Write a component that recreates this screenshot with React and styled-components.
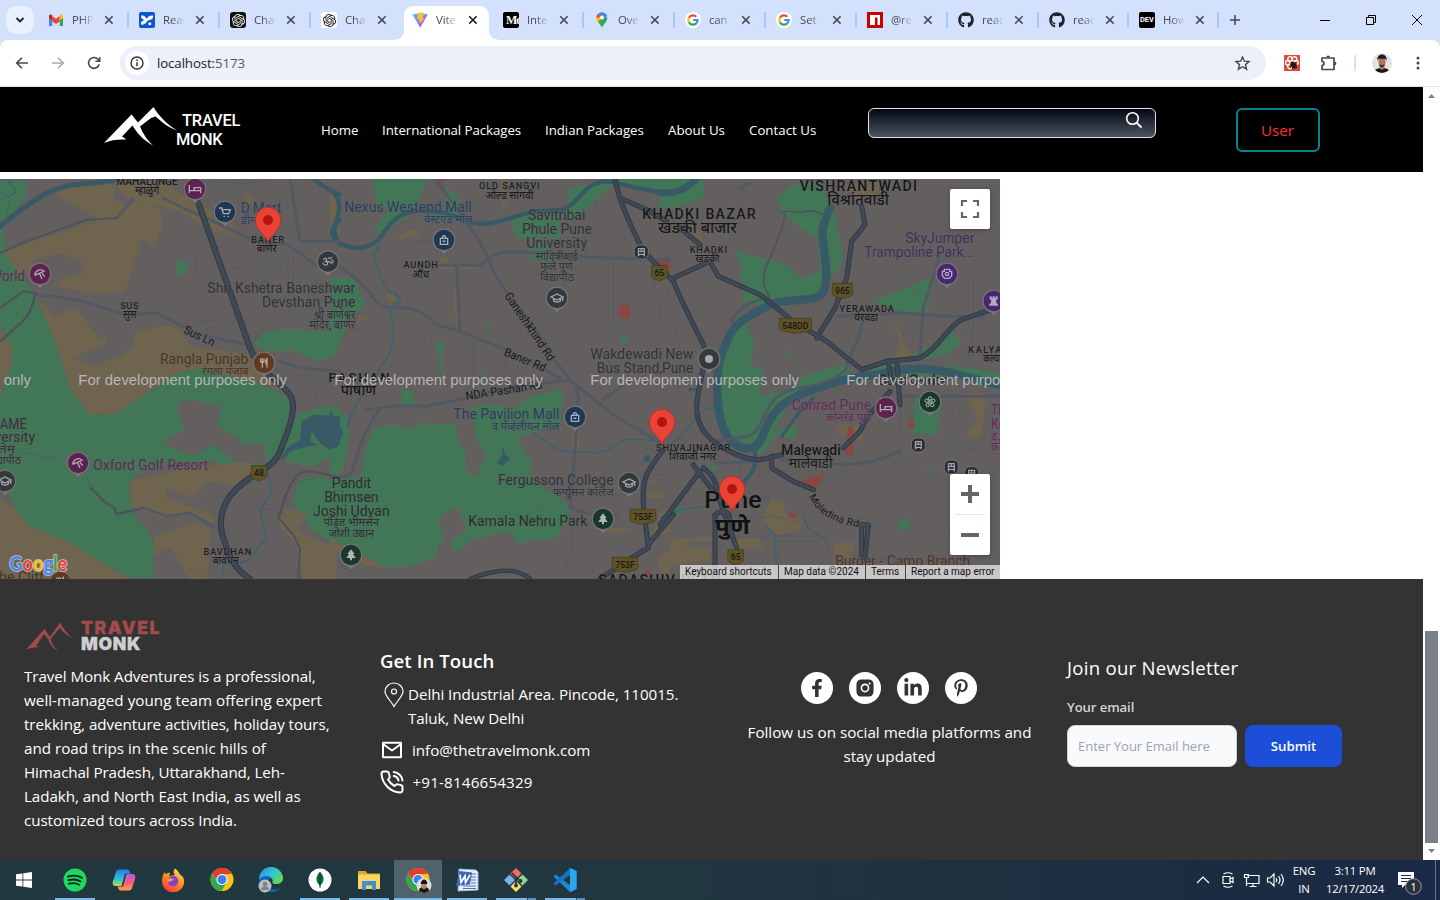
import React from "react";
import styled, { createGlobalStyle } from "styled-components";
import { FaGithub, FaFacebookF, FaLinkedinIn, FaPinterestP } from "react-icons/fa";
import { AiFillInstagram } from "react-icons/ai";
import { SiOpenai } from "react-icons/si";

const Global = createGlobalStyle`
  *, *::before, *::after { box-sizing: border-box; }
  body { margin: 0; overflow: hidden; font-family: "Open Sans", "Noto Sans", sans-serif; }
  svg { display: block; }
  p, h2, h3 { margin: 0; }
`;

const Screen = styled.div`
  width: 1440px;
  height: 900px;
  display: flex;
  flex-direction: column;
  background: #fff;
  overflow: hidden;
`;

/* ---------- browser chrome ---------- */

const TabStrip = styled.div`
  height: 40px;
  flex: none;
  display: flex;
  align-items: stretch;
  background: #d3e1fc;
  padding-left: 6px;
`;

const TabSearch = styled.div`
  width: 28px;
  height: 28px;
  margin: 6px 3px 0 0;
  border-radius: 10px;
  background: #e9f0fd;
  display: grid;
  place-items: center;
`;

const Tab = styled.div`
  width: ${(p) => p.$w || 91}px;
  display: flex;
  align-items: center;
  padding-left: 11px;
  position: relative;
`;

const ActiveShape = styled.svg`
  position: absolute;
  left: -9px;
  top: 6px;
`;

const Favicon = styled.div`
  width: 16px;
  height: 16px;
  position: relative;
`;

const TabTitle = styled.span`
  width: 21px;
  margin-left: 8px;
  font-size: 11.4px;
  letter-spacing: -0.1px;
  line-height: 16px;
  color: #45484d;
  white-space: nowrap;
  overflow: hidden;
  position: relative;
  mask-image: linear-gradient(90deg, #000 40%, transparent 105%);
`;

const TabClose = styled.svg`
  margin-left: 11px;
  position: relative;
`;

const TabDivider = styled.i`
  width: 2px;
  height: 16px;
  margin-left: auto;
  border-radius: 1px;
  transform: translateX(1px);
  background: ${(p) => (p.$off ? "transparent" : "#a8c7fa")};
`;

const WindowButtons = styled.div`
  margin-left: auto;
  display: flex;
  align-items: center;
  gap: 36px;
  padding-right: 18px;
`;

const NewTab = styled.div`
  display: flex;
  align-items: center;
  padding-left: 11px;
`;

const ToolbarBack = styled.div`
  flex: none;
  background: #d3e1fc;
`;

const Toolbar = styled.div`
  height: 47px;
  display: flex;
  align-items: center;
  background: #fff;
  border-radius: 8px 8px 0 0;
  border-bottom: 1px solid #dfe3e3;
  padding: 0 15px 0 14px;
`;

const NavButton = styled.div`
  width: 16px;
  height: 16px;
  margin-right: 20px;
`;

const Omnibox = styled.div`
  width: 1146px;
  height: 34px;
  border-radius: 17px;
  background: #ebf0fa;
  display: flex;
  align-items: center;
  padding: 0 15.5px 0 5px;
  margin-left: -2px;
`;

const SiteInfo = styled.div`
  width: 24px;
  height: 24px;
  border-radius: 50%;
  background: #fff;
  display: grid;
  place-items: center;
`;

const Url = styled.span`
  margin: 0 auto 0 8px;
  font-size: 13.3px;
  letter-spacing: -0.12px;
  color: #1f2124;
  em { font-style: normal; color: #55595e; }
`;

const ToolbarIcons = styled.div`
  display: flex;
  align-items: center;
  margin-left: auto;
`;

const PuzzleIcon = styled.svg`
  margin-left: 20px;
`;

const MenuDots = styled.svg`
  margin: 0 5px 0 23px;
`;

const ToolbarDivider = styled.i`
  width: 2px;
  height: 16px;
  background: #d3e3fd;
  margin: 0 15px 0 16px;
`;

/* ---------- page ---------- */

const Viewport = styled.div`
  height: 773px;
  flex: none;
  display: flex;
`;

const Page = styled.div`
  width: 1423px;
  display: flex;
  flex-direction: column;
`;

const ScrollTrack = styled.div`
  width: 17px;
  display: flex;
  flex-direction: column;
  align-items: center;
  padding: 7px 0;
  background: #fff;
`;

const ScrollThumb = styled.div`
  width: 13px;
  height: 212px;
  margin-top: auto;
  margin-bottom: 6px;
  background: #79808a;
`;

const SiteHeader = styled.header`
  height: 85px;
  margin-bottom: 7px;
  background: #000;
  display: flex;
  align-items: flex-start;
  padding-left: 104px;
`;

const Brand = styled.div`
  width: 217px;
  display: flex;
  padding-top: 19px;
`;

const BrandName = styled.div`
  font: 500 16.4px/19px Roboto, sans-serif;
  color: #fff;
  padding-top: 5px;
  margin-left: -2px;
`;

const BrandWord = styled.div`
  padding-left: ${(p) => p.$indent || 0}px;
  letter-spacing: ${(p) => p.$ls || 0}px;
`;

const Nav = styled.nav`
  width: 547px;
  display: flex;
  gap: 24px;
  padding-top: 33px;
`;

const NavLink = styled.a`
  width: ${(p) => p.$w}px;
  color: #fff;
  font-size: 13.3px;
  line-height: 20px;
  letter-spacing: ${(p) => p.$ls || 0}px;
  white-space: nowrap;
`;

const SearchBox = styled.div`
  width: 288px;
  height: 30px;
  margin-top: 21px;
  border: 1px solid #dfe3e8;
  border-radius: 6px;
  background: linear-gradient(#030712, #4b5563);
  display: flex;
  justify-content: flex-end;
  padding: 1px 11px 0 0;
`;

const UserButton = styled.button`
  width: 84px;
  height: 44px;
  margin: 21px 0 0 80px;
  padding: 0 1px 0 0;
  border: 2px solid #078390;
  border-radius: 6px;
  background: #000;
  color: #f9322c;
  font: 15.2px "Open Sans", sans-serif;
`;

const MapFrame = styled.section`
  width: 1000px;
  height: 400px;
  position: relative;
  overflow: hidden;
  background: #635f5f;
`;

const MapButton = styled.div`
  position: absolute;
  right: 10px;
  top: ${(p) => p.$top}px;
  width: 40px;
  height: ${(p) => p.$h}px;
  background: #fff;
  border-radius: 2px;
  box-shadow: 0 1px 4px rgba(0, 0, 0, 0.3);
`;

const Attribution = styled.div`
  position: absolute;
  right: 0;
  bottom: 0;
  height: 14px;
  display: flex;
  font: 10px/14px Roboto, sans-serif;
  color: #111;
`;

const Credit = styled.span`
  width: ${(p) => p.$w}px;
  padding-left: 5px;
  white-space: nowrap;
  background: rgba(245, 245, 245, 0.7);
  border-left: ${(p) => (p.$first ? 0 : 1)}px solid #444;
`;

const Footer = styled.footer`
  height: 281px;
  background: #333;
  color: #fff;
  display: flex;
  align-items: flex-start;
  padding-left: 24px;
`;

const AboutColumn = styled.div`
  width: 356px;
  padding-top: 38px;
`;

const FooterLogo = styled.div`
  display: flex;
  height: 47px;
`;

const FooterBrand = styled.div`
  font: 900 17.6px/17px Inter, sans-serif;
  padding-top: 2px;
  margin-left: 7px;
  color: #cfcfd0;
  -webkit-text-stroke: 0.3px currentColor;
`;

const RedWord = styled.div`
  color: #a04c4e;
  letter-spacing: 1.5px;
`;

const MonkWord = styled.div`
  letter-spacing: 0.7px;
  line-height: 15px;
`;

const Line = styled.p`
  font-size: 15.2px;
  line-height: 24px;
  letter-spacing: ${(p) => p.$ls || 0}px;
  white-space: nowrap;
`;

const ContactColumn = styled.div`
  width: 368px;
  padding-top: 70px;
`;

const FooterHeading = styled.h2`
  font-size: 18.6px;
  line-height: 24px;
  font-weight: ${(p) => p.$weight};
  letter-spacing: ${(p) => p.$ls || 0}px;
  white-space: nowrap;
`;

const ContactRow = styled.div`
  display: flex;
  gap: ${(p) => p.$gap}px;
  margin-top: ${(p) => p.$mt}px;
`;

const SocialColumn = styled.div`
  width: 283px;
  padding-top: 93px;
  text-align: center;
  display: flex;
  flex-direction: column;
  align-items: center;
`;

const SocialRow = styled.div`
  display: flex;
  gap: 16px;
  padding-right: 2px;
  margin-bottom: 16px;
`;

const SocialDot = styled.div`
  width: 32px;
  height: 32px;
  border-radius: 50%;
  background: #fff;
  color: #333;
  display: grid;
  place-items: center;
`;

const NewsColumn = styled.div`
  margin-left: 36px;
  padding-top: 77px;
`;

const FieldLabel = styled.label`
  display: block;
  margin-top: 17px;
  font-size: 13.1px;
  font-weight: 600;
  line-height: 20px;
  letter-spacing: -0.08px;
  color: #d1d5db;
`;

const FormRow = styled.div`
  display: flex;
  gap: 8px;
  margin-top: 8px;
`;

const EmailField = styled.div`
  width: 170px;
  height: 42px;
  padding-left: 10px;
  border: 1px solid #d1d5db;
  border-radius: 8px;
  background: #f9fafb;
  color: #9ca3af;
  font-size: 13.1px;
  line-height: 40px;
  letter-spacing: -0.05px;
  white-space: nowrap;
`;

const Submit = styled.button`
  width: 97px;
  height: 42px;
  border: 0;
  border-radius: 8px;
  background: #1d4ed8;
  color: #fff;
  font: 600 13.3px "Open Sans", sans-serif;
`;

/* ---------- taskbar ---------- */

const Taskbar = styled.div`
  height: 40px;
  flex: none;
  display: flex;
  background: linear-gradient(90deg, #22383f 0, #21373f 45%, #1c2e40 75%, #1a2945 100%);
`;

const TaskSlot = styled.div`
  width: 48px;
  height: 40px;
  margin-right: ${(p) => (p.$start ? 3 : 1)}px;
  display: flex;
  flex-direction: column;
  align-items: center;
  background: ${(p) => (p.$active ? "#50626a" : "transparent")};
`;

const TaskIcon = styled.div`
  height: 38px;
  padding-top: 2px;
  display: grid;
  place-items: center;
`;

const RunBar = styled.i`
  width: ${(p) => p.$w}px;
  height: 2px;
  background: ${(p) => (p.$split ? "linear-gradient(90deg, #76b9ed 31px, #33505f 31px, #33505f 32px, #5a8fb5 32px)" : "#76b9ed")};
`;

const Tray = styled.div`
  margin-left: auto;
  display: flex;
  align-items: center;
  color: #fff;
`;

const TrayText = styled.div`
  width: ${(p) => p.$w}px;
  margin-left: ${(p) => p.$ml}px;
  font-size: 11.4px;
  line-height: 17.5px;
  padding-bottom: 1px;
  letter-spacing: -0.25px;
  text-align: center;
  white-space: nowrap;
`;

const NoticeIcon = styled.svg`
  margin: 7px 0 0 12px;
`;

const ShowDesktop = styled.i`
  width: 5px;
  height: 40px;
  border-left: 1px solid #65748a;
  margin-left: 10px;
`;

/* ---------- favicons ---------- */

const GmailIcon = () => (
  <svg width="16" height="16" viewBox="0 0 16 16">
    <path d="M1 14V4l3.3 2.5V14z" fill="#4285f4" />
    <path d="M15 14V4l-3.3 2.5V14z" fill="#34a853" />
    <path d="M4.3 9.5V4L8 6.8 11.7 4v5.500L8 12z" fill="#ea4335" />
    <path d="M1 6V4c0-1.500 1.500-2 2.600-1.200l.7.5v5z" fill="#c5221f" />
    <path d="M15 6V4c0-1.500-1.500-2-2.600-1.200l-.7.5v5z" fill="#fbbc04" />
  </svg>
);

const BlueIcon = () => (
  <svg width="16" height="16" viewBox="0 0 16 16">
    <rect width="16" height="16" rx="2" fill="#0b57d0" />
    <path d="M2 3.500c3-.5 4.500 1 5.700 3.200C9 4.500 11 3.200 14.200 3.500c.3 2.500-1 4-3.700 4.500-1.500.3-2.200.8-2.800 1.800C6.500 12 4.500 13 1.800 12.500 1.700 10 3 8.700 5.800 8 3.500 7.500 2 6 2 3.500z" fill="#fff" />
    <circle cx="10.800" cy="11.800" r="1.500" fill="#fff" />
  </svg>
);

const OpenAiTile = styled.div`
  width: 16px;
  height: 16px;
  border-radius: 3px;
  display: grid;
  place-items: center;
  background: ${(p) => (p.$dark ? "#111" : "#fff")};
  color: ${(p) => (p.$dark ? "#fff" : "#111")};
`;

const ViteIcon = () => (
  <svg width="16" height="16" viewBox="0 0 16 16">
    <defs>
      <linearGradient id="vt" x1="0" y1="0" x2=".7" y2="1">
        <stop offset="0" stopColor="#41d1ff" />
        <stop offset="1" stopColor="#b23bff" />
      </linearGradient>
    </defs>
    <path d="M.3 2.500 8 1l7.700 1.500L8.300 15.500z" fill="url(#vt)" />
    <path d="M10.800.2 5.600 1.300l-.4 6 2-.4-.5 2.600 1.700-.5-.9 4L12.200 6l-2 .3 1.700-4z" fill="#ffc31f" />
  </svg>
);

const DarkTile = styled.div`
  width: 16px;
  height: 16px;
  overflow: hidden;
  border-radius: 2px;
  background: #000;
  color: #fff;
  font: ${(p) => p.$font};
  padding-left: ${(p) => p.$pl || 0}px;
  letter-spacing: ${(p) => p.$ls || 0}px;
`;

const MapsIcon = () => (
  <svg width="16" height="16" viewBox="0 0 16 16">
    <path d="M8 16C7.500 13 2.500 10 2.500 5.500L8 5.500h5.500C13.500 10 8.500 13 8 16z" fill="#34a853" />
    <path d="M2.800 7.500A5.500 5.500 0 0 1 4 1.800l4 3.700-4 5z" fill="#fbbc04" />
    <path d="M2.500 6A5.500 5.500 0 0 1 4 1.800L7 4.500z" fill="#ea4335" />
    <path d="M4 1.800C6.500-1 12 0 13.200 4L9 8 8 5.500z" fill="#4285f4" />
    <circle cx="8" cy="5.500" r="1.900" fill="#fff" />
  </svg>
);

const GoogleG = () => (
  <svg width="16" height="16" viewBox="0 0 16 16">
    <circle cx="8" cy="8" r="8" fill="#fff" />
    <g fill="none" strokeWidth="2.200">
      <path d="M11.300 4.700A4.700 4.700 0 0 0 3.900 5.700" stroke="#ea4335" />
      <path d="M3.900 5.700a4.700 4.700 0 0 0 0 4.700" stroke="#fbbc04" />
      <path d="M3.900 10.400a4.700 4.700 0 0 0 7.300 1" stroke="#34a853" />
      <path d="M11.200 11.400A4.700 4.700 0 0 0 12.600 8H8.200" stroke="#4285f4" />
    </g>
  </svg>
);

const NpmIcon = () => (
  <svg width="16" height="16" viewBox="0 0 16 16">
    <path fill="#cb0000" d="M0 0h16v16H0z" />
    <path fill="#fff" d="M3 3h10v10h-2.500V5.500H8V13H3z" />
  </svg>
);

const X = ({ bold }) => (
  <TabClose width="10" height="10" viewBox="0 0 10 10">
    <path d="M1.200 1.200l7.400 7.400M8.600 1.200L1.200 8.600" stroke={bold ? "#1f1f1f" : "#45484d"} strokeWidth="1.500" />
  </TabClose>
);

const TABS = [
  ["PHP", <GmailIcon />],
  ["React", <BlueIcon />],
  ["Chat", <OpenAiTile $dark><SiOpenai size={13} /></OpenAiTile>],
  ["Chat", <OpenAiTile><SiOpenai size={13} /></OpenAiTile>],
  ["Vite", <ViteIcon />],
  ["Inter", <DarkTile $font={'700 12px/16px "Liberation Serif", serif'} $pl={3} $ls={-1}>Me</DarkTile>],
  ["Over", <MapsIcon />],
  ["can", <GoogleG />],
  ["Set", <GoogleG />],
  ["@re", <NpmIcon />],
  ["react", <FaGithub size={16} color="#1f2328" />],
  ["react", <FaGithub size={16} color="#1f2328" />],
  ["How", <DarkTile $font={'700 7.5px/15px Roboto, sans-serif'} $pl={1}>DEV</DarkTile>],
];

const Chrome = () => (
  <>
    <TabStrip>
      <TabSearch>
        <svg width="10" height="6" viewBox="0 0 10 6"><path d="M1.500 1l3.500 3.500L8.500 1" fill="none" stroke="#1f1f1f" strokeWidth="1.800" /></svg>
      </TabSearch>
      {TABS.map(([title, icon], i) => (
        <Tab key={i} $w={i > 10 ? 90 : 91}>
          {i === 4 && (
            <ActiveShape width="109" height="34" viewBox="0 0 109 34">
              <path d="M0 34C8 34 12 30 12 24V10C12 4 16 0 22 0H87C93 0 97 4 97 10V24C97 30 101 34 109 34z" fill="#fff" />
            </ActiveShape>
          )}
          <Favicon>{icon}</Favicon>
          <TabTitle>{title}</TabTitle>
          <X bold={i === 4} />
          <TabDivider $off={i === 3 || i === 4} />
        </Tab>
      ))}
      <NewTab>
        <svg width="12" height="12" viewBox="0 0 12 12"><path d="M6 1v10M1 6h10" stroke="#45484d" strokeWidth="1.600" /></svg>
      </NewTab>
      <WindowButtons>
        <svg width="10" height="10" viewBox="0 0 10 10"><path d="M0 5.500h10" stroke="#000" /></svg>
        <svg width="10" height="10" viewBox="0 0 10 10"><path d="M.5 2.500h7v7h-7zM2.500 2.500v-2h7v7h-2" fill="none" stroke="#000" /></svg>
        <svg width="10" height="10" viewBox="0 0 10 10"><path d="M0 0l10 10M10 0L0 10" stroke="#000" /></svg>
      </WindowButtons>
    </TabStrip>
    <ToolbarBack>
      <Toolbar>
        <NavButton><svg width="16" height="16" viewBox="0 0 16 16"><path d="M14 8H3M8 2.700L2.700 8 8 13.300" fill="none" stroke="#45484d" strokeWidth="1.600" /></svg></NavButton>
        <NavButton><svg width="16" height="16" viewBox="0 0 16 16"><path d="M2 8h11M8 2.700L13.300 8 8 13.300" fill="none" stroke="#a9abae" strokeWidth="1.600" /></svg></NavButton>
        <NavButton><svg width="16" height="16" viewBox="0 0 16 16"><path d="M13.200 9.300A5.400 5.400 0 1 1 12 4.300L13.500 6M13.700 2v4.300H9.400" fill="none" stroke="#45484d" strokeWidth="1.600" /></svg></NavButton>
        <Omnibox>
          <SiteInfo>
            <svg width="14" height="14" viewBox="0 0 14 14"><circle cx="7" cy="7" r="6" fill="none" stroke="#303236" strokeWidth="1.400" /><path d="M7 6.200v4M7 3.600v1.400" stroke="#303236" strokeWidth="1.500" /></svg>
          </SiteInfo>
          <Url>localhost:<em>5173</em></Url>
          <svg width="17" height="17" viewBox="0 0 17 17"><path d="M8.500 2l1.800 4.200 4.700.4-3.500 3 1.100 4.600-4.100-2.500-4.100 2.500 1.100-4.600L2 6.600l4.700-.4z" fill="none" stroke="#45484d" strokeWidth="1.400" /></svg>
        </Omnibox>
        <ToolbarIcons>
          <svg width="16" height="16" viewBox="0 0 16 16">
            <path fill="#dc4a38" d="M0 0h16v16H0z" />
            <g fill="none" stroke="#fff" strokeWidth="1.300"><circle cx="6" cy="4" r="2.300" /><circle cx="10.500" cy="4" r="2.300" /><circle cx="3.800" cy="7.800" r="2.300" /><circle cx="12.300" cy="7.500" r="2" /><circle cx="6" cy="11.500" r="2.300" /></g>
            <ellipse cx="9.600" cy="10.200" rx="2.600" ry="3.800" transform="rotate(-35 9.600 10.200)" fill="#2d1613" /><path d="M6 9l7 4M12 7l-4 7M6 12l7-3" stroke="#2d1613" />
          </svg>
          <PuzzleIcon width="18" height="18" viewBox="0 0 18 18">
            <path d="M2 4h12v11.500H2v-4c2.700-.2 2.700-3.800 0-4z" fill="none" stroke="#45484d" strokeWidth="1.700" strokeLinejoin="round" /><path d="M6.300 3.500a1.900 1.900 0 0 1 3.800 0zM14.500 7.500a1.900 1.900 0 0 1 0 3.800z" fill="#45484d" />
          </PuzzleIcon>
          <ToolbarDivider />
          <svg width="22" height="22" viewBox="0 0 22 22">
            <clipPath id="av"><circle cx="11" cy="11" r="10" /></clipPath>
            <g clipPath="url(#av)"><path fill="#e4e2df" d="M0 0h22v22H0z" /><path d="M3 22c0-5 4-6 8-6s8 1 8 6z" fill="#17191c" /><path d="M8.500 12h5v4.500L11 18l-2.500-1.500z" fill="#a8745a" /><ellipse cx="11" cy="9.500" rx="3.600" ry="5" fill="#a8775d" /><path d="M8 12.500c1 3.500 5 3.500 6 0l-3 .5z" fill="#4a2c20" /><path d="M6.300 8.500C5.500.5 16.500.5 15.700 8.500L14.500 6.800h-7z" fill="#1c1a1c" /></g>
          </svg>
          <MenuDots width="4" height="16" viewBox="0 0 4 16"><g fill="#45484d"><circle cx="2" cy="3" r="1.500" /><circle cx="2" cy="8" r="1.500" /><circle cx="2" cy="13" r="1.500" /></g></MenuDots>
        </ToolbarIcons>
      </Toolbar>
    </ToolbarBack>
  </>
);

/* ---------- map drawing: three map units per pixel ---------- */

const GREEN = [
  [0, "M0 10H82L78 60 30 110 0 130ZM0 150 12 165 14 220 60 280 105 350 170 500 205 620 265 710 350 707 520 580 620 560 740 600 850 650 885 680 860 780 820 850 750 880 640 850 520 855 420 880 385 910 400 1010 440 1050 460 1100V1200H395L300 1150 210 1095 80 1040 45 990 30 950 0 910V660L35 560 35 500 0 440Z"],
  [0, "M530 245 563 255 558 285 540 298 528 280ZM757 495 800 460 880 453 940 460 1010 460V530L950 550 880 515 800 520ZM895 705 980 685 1020 690V830L930 865 860 850 850 800ZM915 895 985 900 1020 940V1105L940 1060 880 975 890 920Z"],
  [990, "M130 3H290L270 60 240 110 150 170 130 150 180 95 140 80ZM345 30 390 60 380 120 260 130 350 100ZM540 115 590 105 650 115 690 110 690 180H560ZM600 200H650L680 250 605 245ZM720 30 850 3H1020V50L850 20 780 80 730 130 705 120ZM0 300 70 300 110 380 60 420 20 520 0 530Z"],
  [990, "M320 495 342 492 335 560 345 590 330 580 328 530 312 510ZM468 440 478 428 480 450 472 455ZM872 475H890V500H872ZM215 630 250 640 255 675 215 680ZM455 580 468 590 460 630ZM0 690 50 710 60 780 40 870 0 920Z"],
  [990, "M130 750 200 740 230 755 280 735 375 740 380 780 405 820 410 880 440 895 470 830 440 780 420 690 480 680 560 690 600 655 695 635 700 660 690 740 640 755 560 780 580 820 610 850 600 890 640 930 700 965 720 1000 680 1080 560 1095 540 1060 420 1085 390 1120 358 1110 370 1080 410 1060 385 990 350 1000 325 1030 340 1080 310 1140 245 1165 140 1168 80 1130 20 1110 0 1060V900L90 900 105 820Z"],
  [1980, "M0 3H130V60L60 85 0 90ZM350 60 400 20 480 15 500 60 520 85 540 180 550 240 540 270 515 290 500 350 440 370 330 390 250 370 240 250 222 220 310 240 380 260 420 300 480 280 475 180 420 150 365 100ZM230 420 280 400 260 450 285 490 270 560 310 580 300 650 380 640 440 590 560 555 570 580 520 615 400 655 340 760 410 740 410 785 350 770 300 830 200 780 180 740 170 620 205 500Z"],
  [1980, "M640 372 700 345 812 300 805 405 720 400ZM880 462 905 495 860 530 790 545 720 550 715 540 800 510ZM640 570 700 545 740 570 900 565 1020 585V640L900 600 740 595 600 610ZM765 655H845L830 770 757 765ZM738 1022 755 1040 740 1060 712 1050 715 1030ZM140 855 175 870 160 882ZM802 865 822 880 800 882ZM375 525 395 515 385 535ZM40 990 70 990 60 1010 20 1030Z"],
];

const TAN = [
  [0, "M165 50 200 20 300 8 345 20 340 65 385 85 430 60 480 95 488 140 460 205 425 182 400 260 375 342 290 352 172 325 182 300 255 285 245 250 178 225 170 245 100 250 100 300 60 290 12 225 80 195 300 125Z"],
  [0, "M340 10H480L600 80 700 130 720 180 640 160 540 100 380 60ZM105 350 160 415 230 390 275 425 330 460 312 500 212 540 285 565 370 530 405 500 400 465 450 430 540 455 575 510 650 515 750 530 860 645 740 605 600 570 520 590 350 707 265 710 205 620 170 500ZM0 450 35 500V560L0 660Z"],
  [0, "M0 960 45 990 80 1040 210 1095 300 1150 390 1203H0ZM388 910 560 870 745 850 760 880 700 925 620 910 580 960 500 930 500 960 640 1010 640 1050 570 1010 480 1020 420 995 395 985ZM460 1075 600 1030 630 1060 625 1203H570L510 1110 460 1130ZM850 985 920 1010 890 1060 1010 1110V1203H910L890 1100 835 1040Z"],
  [0, "M735 50H760V80H735ZM880 1085 905 1095 890 1110ZM990 20 1020 60V200L990 180Z"],
  [990, "M200 180 230 160 265 155V175L200 185ZM330 235H353V262H446V272H326ZM370 318 380 350 388 430 378 445ZM508 3H525V100L515 95ZM168 350 190 345 200 365 180 375ZM85 415H115V425H85ZM725 760H738L750 790 745 815H728ZM820 1050H900V1060L820 1065ZM480 1170H540V1178H480ZM0 1080 90 1125 165 1168 100 1160 0 1110ZM945 900H980V910H945ZM960 940 1000 945V960H955ZM990 1000 1020 985V1060L965 1080ZM985 1130 1020 1120V1190H990Z"],
  [1980, "M530 20 660 8 655 50 600 60ZM90 140 120 160 130 200 95 180ZM685 415 725 465 735 500 755 530 715 550 700 540 722 505 715 470ZM520 740H600L610 800 580 770H540ZM912 645H975V665L965 770 930 785 920 765 950 720ZM335 960 370 975 380 1010 440 1020 410 1060 340 1070 320 1040 310 1010ZM30 1085 160 1075V1090H80V1110H155L150 1150 30 1160ZM225 1080 300 1080 310 1110 240 1110ZM520 1100 580 1090V1150H530Z"],
];

const RED = [
  [990, "M868 380 900 382 898 422 868 418ZM970 245H1020V285L990 260Z"],
  [1980, "M415 912 495 882 478 920 450 938ZM565 745 580 745V830L555 832ZM750 722H762V750L748 748ZM385 1003 410 1008V1020L388 1018Z"],
  [990, "M320 3H350L330 20ZM945 1180 960 1176V1190H945Z"],
];

const WATER_FILL = [
  [0, "M905 730 940 710 1020 715V800L990 815 960 795 935 760 930 790 950 800 880 815 840 850 860 810 900 785Z"],
  [990, "M0 695 40 765 20 810 0 805ZM518 800 526 832 540 840 520 862 500 855 515 835ZM942 835 958 828 960 852 940 850Z"],
];

const RIVERS = [
  [0, 15, "M0 145C80 80 120 50 180 30S300 20 345 5"],
  [0, 12, "M940 3 970 25 1020 50M1020 125C990 150 1010 180 1020 200"],
  [990, 13, "M0 35C40 60 30 110 10 150S60 220 110 205S160 150 200 120S320 90 400 125S540 110 620 100L700 95C750 70 750 40 790 20S850 15 900 25S960 42 1020 45"],
  [1980, 20, "M0 45C60 45 80 30 110 3"],
  [1980, 25, "M510 90C485 150 485 160 490 200C498 250 510 330 480 352S360 360 330 380S230 420 205 480S175 550 172 610S178 750 210 785S290 820 305 780S340 690 400 660S560 600 610 595S720 570 780 572S900 590 1020 622"],
  [1980, 12, "M285 820C290 880 270 890 245 920L190 985"],
  [1980, 10, "M90 635H112M365 775 420 700 460 660"],
];

const CREEKS = [
  [0, "M20 3 50 40 20 60M800 870 815 940 780 1000 800 1080 740 1150 670 1160 665 1200"],
  [990, "M150 180C150 240 120 220 130 230S150 330 195 350 175 380 180 400 200 460 180 520 150 550 150 570 80 660 60 720L50 750M610 765C680 810 670 820 740 822S820 830 860 800 940 790 1000 790"],
  [1980, "M30 800C100 750 110 690 160 690M315 1040 345 1070 350 1200M430 1010C440 1080 500 1060 505 1110M0 1020 60 995 150 985"],
];

const MINOR = [
  [0, "M0 40 30 60 20 110 60 150 75 190M480 55 640 130 700 165 800 200M560 8 720 15M690 20 800 10M600 200 720 215M590 230V290L700 270 900 280 980 330M850 210 840 280 770 330M600 300 580 390 640 370M640 340H660M755 500 790 450 880 420 940 400M800 220V380L870 400M880 220V350M740 430 600 430M610 455 700 435M820 580 980 600M780 620 940 640 1020 660M945 600V670M810 870 900 910 940 900M700 930 750 1000 830 990 900 1050M660 1030 700 1080 820 1050M690 1170 770 1130 900 1100M570 1170 620 1200M870 950 830 1040 820 1100M860 920 800 1000"],
  [0, "M50 830C100 810 110 850 160 835L230 830 270 920 300 960"],
  [990, "M180 230 260 190 350 190M300 270 295 320 360 325M200 300 240 380M190 440 280 460M280 460 290 540M110 690V600L250 540M430 480V600L520 615M530 520 520 610M130 960 40 980M600 50 610 80M800 60 760 200 770 230M850 240V460L960 470M760 350 820 430 920 460M760 350 650 370M660 390 740 540M940 420 990 400M970 300 1000 460M880 860 930 800 990 830M760 830 830 880 910 870 940 850M830 830 850 910M880 880 960 890 1020 890M720 1110 860 1120 950 1110M330 1100 320 1200M20 1160 110 1200M960 820 1020 830M870 860 890 830M630 990 560 1040M720 980 725 1100 700 1203M930 900 1020 910M950 980 1020 990M940 700 980 780M750 720 770 760"],
  [1980, "M0 230 80 260M20 330 50 460 80 620M80 620 0 640M130 500 150 450 200 480M245 30 310 80 360 100M310 320 310 260 370 200M30 760 80 800 110 900M60 820 20 940M120 950 60 980M200 1080 420 1070M30 1000 160 1010M230 1020 340 1015 450 1040M440 820 480 900 560 940 700 960M560 850V950M720 660 725 850 800 990M720 850 650 870 540 850M720 800H870L1020 830M800 990 900 960M720 1060 850 1040 1000 1140M700 1180 800 1060M600 1050 700 1040M850 420 870 500M940 300V460L920 560M830 330 850 240 920 260M820 30 870 180M780 340 700 300 600 320M600 660 640 680M870 660 1020 650M900 660 890 850M980 780 900 830M1000 880 920 900M620 200 700 240 790 230M650 120 760 80 830 100M240 840V940L330 960M290 840 300 900 420 960M380 860V940M0 720 80 700M0 860 80 870M150 870 200 960 340 960M350 1090 480 1090M550 960 540 1080M560 1120 640 1160 730 1110"],
];

const ROADS = [
  [0, 8, "M490 60 570 100 640 130 780 195 860 200 900 225 950 265M110 350 230 365 380 410 470 405 530 435 600 470 740 500M840 550 900 570 1020 580M870 3 900 190 1020 190M350 120 400 60M430 990 500 1015 570 1005 650 1050"],
  [990, 9, "M0 240C50 290 80 290 130 360S220 340 320 440L390 460 540 520 620 560 690 600M320 8C370 80 400 120 430 160S480 270 520 330L600 430 680 555 730 615 850 710 1000 800M380 270 390 460M330 262H450L490 230 520 222 650 225 770 238 1020 245M110 695 200 683 290 685 410 660 560 625 650 615 720 605M150 690C100 760 80 830 70 870S40 890 0 900M740 635 745 660 735 820 720 990M820 665 880 620M725 985C740 1000 760 1010 860 1010"],
  [1980, 9, "M240 30 270 15M530 415 720 405 860 415 970 415M610 410C600 500 570 520 560 560M840 230 790 390 780 530M720 655 1020 655M300 365C250 380 230 400 215 430M365 845 560 860 640 850 720 820M165 790 260 775C290 770 300 740 320 700S360 640 420 630 540 600 560 570M170 855 300 850"],
];

const DARK_ROADS = [
  [0, 6, "M0 225 80 190 260 125 350 120"],
  [0, 7, "M0 390 70 340 105 345M105 350C90 420 80 420 0 490M270 930C300 950 310 980 340 985L350 1008 430 990M835 1020C860 940 880 880 920 880S980 890 1020 900M835 1020 880 1070 900 1110 895 1203"],
  [1980, 5, "M365 105C400 90 410 110 440 100S480 115 500 110M375 110C360 200 320 240 312 290S330 340 330 370"],
];

const HIGHWAYS = [
  [0, 15, "M595 75 750 510C780 590 860 620 875 660S860 770 840 820 770 880 730 915C670 960 650 1020 670 1080S700 1170 750 1203"],
  [990, 12, "M855 3C870 80 910 160 940 220L1030 310M870 60 960 100 1010 130M1000 815C950 880 935 900 940 980L955 1110C900 1140 860 1170 810 1203M955 1100 1030 1010"],
  [990, 10, "M420 1203C480 1180 550 1160 600 1203"],
  [1980, 12, "M60 150 120 200M155 260 175 295 300 350 400 430 500 490 605 575 680 550 780 540C840 510 870 430 920 420L1020 385M605 85 615 140 575 190 560 300 525 390 470 480M40 300 150 250M40 310C60 360 110 460 130 500S110 620 110 690 160 800 230 830 330 835 365 830M335 835 335 870 400 910 460 935M130 870C170 900 170 930 180 970L230 1110M120 880 0 1040M100 860 160 940M165 1200V1010C190 990 210 1000 210 1030M550 810 600 760 620 720 690 640M685 550 695 610M710 550 720 680M600 1040H625L615 1140M605 1040V1130"],
];

const LABELS = [
  [0, 441, 20, "MAHALUNGE", 29, 185, "m", "#1b1c1e", 500],
  [0, 441, 48, "म्हाळुंगे", 27, 72, "m", "#1b1c1e", 500],
  [0, 722, 105, "D Mart", 40, 122, "s", "#263e5e"],
  [0, 722, 138, "डीमार्ट", 28, 76, "s", "#263e5e"],
  [0, 803, 196, "BANER", 26, 98, "m", "#1b1c1e", 500],
  [0, 800, 223, "बाणेर", 26, 60, "m", "#1b1c1e", 500],
  [0, 75, 308, "World", 40, 104, "e", "#57304f"],
  [0, 1066, 344, "Shri Kshetra Baneshwar", 40, 444, "e", "#2d3236"],
  [0, 1066, 387, "Devsthan Pune", 40, 280, "e", "#2d3236"],
  [0, 1066, 422, "श्री बाणेश्वर", 30, 125, "e", "#2d3236"],
  [0, 1066, 453, "मंदिर, बाणेर", 30, 138, "e", "#2d3236"],
  [0, 388, 393, "SUS", 26, 55, "m", "#1b1c1e", 500],
  [0, 389, 421, "सुस", 26, 40, "m", "#1b1c1e", 500],
  [0, 745, 558, "Rangla Punjab", 40, 265, "e", "#4b3421"],
  [0, 745, 591, "रंगला पंजाब", 29, 138, "e", "#4b3421"],
  [0, 80, 752, "FLAME", 40, 122, "e", "#2d3236"],
  [0, 105, 792, "University", 40, 182, "e", "#2d3236"],
  [0, 45, 824, "फ्लेम", 29, 75, "e", "#2d3236"],
  [0, 63, 857, "विद्यापीठ", 29, 102, "e", "#2d3236"],
  [0, 280, 877, "Oxford Golf Resort", 40, 344, "s", "#582b50"],
  [0, 682, 1131, "BAVDHAN", 26, 143, "m", "#1b1c1e", 500],
  [0, 677, 1158, "बावधन", 26, 78, "m", "#1b1c1e", 500],
  [0, 132, 1213, "The Cliff", 40, 160, "e", "#4b3421"],
  [990, 87, 612, "PASHAN", 37, 183, "m", "#161718", 500],
  [990, 85, 651, "पाषाण", 34, 106, "m", "#161718", 500],
  [990, 538, 34, "OLD SANGVI", 26, 182, "m", "#1b1c1e", 500],
  [990, 538, 62, "ओल्ड सांगवी", 26, 145, "m", "#1b1c1e", 500],
  [990, 43, 102, "Nexus Westend Mall", 40, 382, "s", "#263e5e"],
  [990, 427, 135, "वेस्टएंड मॉल", 29, 145, "e", "#263e5e"],
  [990, 272, 271, "AUNDH", 26, 103, "m", "#1b1c1e", 500],
  [990, 272, 299, "औंध", 26, 50, "m", "#1b1c1e", 500],
  [990, 680, 125, "Savitribai", 40, 172, "m", "#2d3236"],
  [990, 681, 168, "Phule Pune", 40, 210, "m", "#2d3236"],
  [990, 680, 210, "University", 40, 182, "m", "#2d3236"],
  [990, 680, 245, "सावित्रीबाई", 29, 125, "m", "#2d3236"],
  [990, 680, 277, "फुले पुणे", 29, 98, "m", "#2d3236"],
  [990, 681, 309, "विद्यापीठ", 29, 102, "m", "#2d3236"],
  [990, 781, 542, "Wakdewadi New", 40, 309, "s", "#2d3236"],
  [990, 800, 585, "Bus Stand,Pune", 40, 290, "s", "#2d3236"],
  [990, 370, 722, "The Pavilion Mall", 40, 318, "s", "#263e5e"],
  [990, 688, 755, "द पॅव्हेलीयन मॉल", 29, 202, "e", "#263e5e"],
  [990, 64, 930, "Pandit", 40, 118, "m", "#1b332b"],
  [990, 64, 971, "Bhimsen", 40, 163, "m", "#1b332b"],
  [990, 64, 1013, "Joshi Udvan", 40, 230, "m", "#1b332b"],
  [990, 64, 1045, "पंडित भीमसेन", 29, 165, "m", "#1b332b"],
  [990, 64, 1078, "जोशी उद्यान", 29, 136, "m", "#1b332b"],
  [990, 851, 921, "Fergusson College", 40, 347, "e", "#2d3236"],
  [990, 851, 953, "फर्ग्युसन कॉलेज", 29, 182, "e", "#2d3236"],
  [990, 415, 1043, "Kamala Nehru Park", 40, 357, "s", "#1b332b"],
  [1980, 99, 819, "SHIVAJINAGAR", 26, 222, "m", "#1b1c1e", 500],
  [1980, 98, 847, "शिवाजी नगर", 26, 142, "m", "#1b1c1e", 500],
  [1980, 117, 122, "KHADKI BAZAR", 40, 340, "m", "#161718", 500],
  [1980, 113, 164, "खडकी बाजार", 38, 236, "m", "#161718", 500],
  [1980, -2, 1222, "SADASHIV PETH", 40, 367, "m", "#161718", 500],
  [1980, 595, 38, "VISHRANTWADI", 40, 352, "m", "#161718", 500],
  [1980, 594, 80, "विश्रांतवाडी", 38, 185, "m", "#161718", 500],
  [1980, 145, 225, "KHADKI", 26, 112, "m", "#1b1c1e", 500],
  [1980, 142, 253, "खडकी", 26, 72, "m", "#1b1c1e", 500],
  [1980, 943, 194, "SkyJumper", 40, 207, "e", "#402e5b"],
  [1980, 943, 237, "Trampoline Park...", 40, 330, "e", "#402e5b"],
  [1980, 620, 402, "YERAWADA", 26, 163, "m", "#1b1c1e", 500],
  [1980, 618, 430, "येरवडा", 26, 72, "m", "#1b1c1e", 500],
  [1980, 925, 524, "KALYANI", 26, 135, "s", "#1b1c1e", 500],
  [1980, 970, 552, "कल्याणी", 26, 80, "s", "#1b1c1e", 500],
  [1980, 655, 620, "Bund Garden", 40, 212, "s", "#25282a", 500],
  [1980, 633, 696, "Conrad Pune", 40, 238, "e", "#64295a"],
  [1980, 633, 729, "कॉनरॅड पुणे", 29, 135, "e", "#64295a"],
  [1980, 453, 831, "Malewadi", 41, 178, "m", "#161718", 500],
  [1980, 452, 871, "मालेवाडी", 37, 132, "m", "#161718"],
  [1980, 219, 990, "Pune", 74, 172, "m", "#121212", 500],
  [1980, 217, 1069, "पुणे", 68, 105, "m", "#121212", 700],
  [1980, 993, 710, "The", 40, 60, "s", "#64295a"],
  [1980, 993, 753, "Koregaon", 40, 160, "s", "#64295a"],
  [1980, 993, 788, "द", 30, 18, "s", "#64295a"],
  [1980, 993, 818, "कोरेगाव", 30, 90, "s", "#64295a"],
  [1980, 728, 1163, "Burger - Camp Branch", 40, 405, "m", "#4b3328"],
];

const ANCHOR = { s: "start", m: "middle", e: "end" };
const isDevanagari = (text) => /[\u0900-\u097f]/.test(text);

/* Devanagari is set larger so that both scripts look equally tall. */
const labelSize = (text, size) => {
  if (size > 60) return size;
  return isDevanagari(text) ? size * 1.2 : size * 1.06;
};

const SHIELDS = [
  [777, 885, "48", 46], [990 + 988, 285, "65", 46], [990 + 939, 1016, "753F", 76], [990 + 885, 1160, "753F", 76],
  [1980 + 547, 338, "965", 60], [1980 + 406, 443, "548DD", 96], [1980 + 227, 1137, "65", 46],
];

const GLYPHS = {
  bed: <path d="M-17-12V12M-17 5H17V-4H-3V5M17 5V12" fill="none" stroke="#b3a8b0" strokeWidth="4" />,
  cart: <path d="M-17-12H-10L-5 5H11L16-7H-9M-3 13h1M9 13h1" fill="none" stroke="#a5aeb8" strokeWidth="4" strokeLinecap="round" />,
  om: <path d="M-14-7C-6-14 0-6-7-1C2 0 0 12-9 10C-14 9-15 5-14 3M-2 1C6-5 8 9 14 3C17-2 13-7 8-4M0-12Q6-8 12-13" fill="none" stroke="#a7a9aa" strokeWidth="3.500" />,
  golf: <path d="M-16 4C-14-12 2-18 12-8L-16 4M-2-3 6 15M6-2l8 10" fill="none" stroke="#b3a8b0" strokeWidth="4" />,
  food: <path d="M-10-14V-4Q-5 2 0-4V-14M-5-14V14M9 14V-14Q3-8 6 2H9" fill="none" stroke="#bdaea2" strokeWidth="3.500" />,
  cap: <path d="M0-12-18-3 0 6 18-3ZM-10 2V9Q0 16 10 9V2M17-3V9" fill="none" stroke="#a7a9aa" strokeWidth="4" />,
  bag: <path d="M-11-5H11V13H-11ZM-5-5Q-5-13 0-13T5-5M-4 2Q0 8 4 2" fill="none" stroke="#a5aeb8" strokeWidth="4" />,
  tree: <path d="M0-17 11-3H6L14 9H3V16H-3V9H-14L-6-3H-11Z" fill="#aab8b1" />,
  dot: <circle r="12" fill="#a7a9aa" />,
  flower: <g fill="none" stroke="#aab8b1" strokeWidth="3"><circle r="4" /><circle cx="0" cy="-11" r="5" /><circle cx="10" cy="-4" r="5" /><circle cx="7" cy="9" r="5" /><circle cx="-7" cy="9" r="5" /><circle cx="-10" cy="-4" r="5" /></g>,
  face: <g fill="none" stroke="#b3a8c2" strokeWidth="4"><path d="M-8-14H8V-8H14V5L7 13H-7L-14 5V-8H-8Z" /><circle r="5" /></g>,
  rook: <path d="M-12-14H-6V-9H-3V-14H3V-9H6V-14H12V-4H7L9 8H13V14H-13V8H-9L-7-4H-12Z" fill="#b3a8c2" />,
};

const POIS = [
  [585, 33, "#5d2350", "bed"], [675, 102, "#1d3850", "cart"], [984, 251, "#33393c", "om"], [120, 288, "#5d2350", "golf"],
  [792, 555, "#603a22", "food"], [234, 855, "#5d2350", "golf"], [15, 909, "#33393c", "cap"], [181, 1212, "#603a22", "food"],
  [990 + 342, 186, "#1d3850", "bag"], [990 + 681, 360, "#33393c", "cap"], [990 + 735, 717, "#1d3850", "bag"], [990 + 897, 915, "#33393c", "cap"],
  [990 + 819, 1023, "#18382a", "tree"], [990 + 63, 1131, "#18382a", "tree"], [1980 + 147, 543, "#33393c", "dot"], [1980 + 678, 690, "#5d2350", "bed"],
  [1980 + 810, 672, "#18382a", "flower"], [1980 + 861, 288, "#48276f", "face"], [1980 + 1001, 369, "#48276f", "rook"],
];

const Poi = ({ x, y, fill, glyph }) => (
  <g transform={`translate(${x} ${y})`}>
    <path d="M-9 34 0 45 9 34C24 30 35 17 35 0A35 35 0 0 0-35 0C-35 17-24 30-9 34Z" fill="#77777a" stroke="#4d4d50" strokeWidth="1" />
    <circle r="30.500" fill={fill} />
    {GLYPHS[glyph]}
  </g>
);

const Station = ({ x, y }) => (
  <g transform={`translate(${x} ${y})`}>
    <rect x="-21" y="-21" width="42" height="42" rx="16" fill="#272d33" stroke="#727579" strokeWidth="3" />
    <path d="M-9-10H9V7H-9ZM-9-2H9M0-10V-2M-6 8-10 13M6 8 10 13" fill="none" stroke="#a2a5a8" strokeWidth="3.500" />
  </g>
);

const Marker = ({ x, y }) => (
  <g transform={`translate(${x} ${y})`}>
    <path d="M0 69C-4 45-38 32-38 0A38 38 0 0 1 38 0C38 32 4 45 0 69Z" fill="#ea4335" stroke="#b92c22" strokeWidth="2.500" />
    <circle r="15" fill="#b31412" />
  </g>
);

const Shapes = ({ list, ...rest }) => list.map(([dx, d], i) => <path key={i} transform={`translate(${dx} 0)`} d={d} {...rest} />);
const Strokes = ({ list, color, extra = 0 }) =>
  list.map(([dx, w, d], i) => (
    <path key={i} transform={`translate(${dx} 0)`} d={d} fill="none" stroke={color} strokeWidth={w + extra} strokeLinejoin="round" strokeLinecap="round" />
  ));

const RoadName = ({ x, y, angle, w, children }) => (
  <text transform={`translate(${x} ${y}) rotate(${angle})`} fontSize="36" textLength={w} lengthAdjust="spacingAndGlyphs" fill="#141517">{children}</text>
);

const MapCanvas = () => (
  <svg width="1000" height="400" viewBox="0 3 3000 1200" fontFamily='Roboto, "Noto Sans Devanagari", "Noto Sans", sans-serif'>
    <rect y="3" width="3000" height="1200" fill="#635f5f" />
    <Shapes list={GREEN} fill="#417757" />
    <Shapes list={TAN} fill="#6f654f" />
    <path d="M535 672 570 665 662 682 655 745 740 800 790 795 802 860 700 850 640 800 580 835 485 795 555 755 532 700Z" fill="#635f5f" />
    <path d="M100 250 178 225 250 265 182 300 175 325 100 300ZM250 345 375 345 450 380 500 440 400 465 300 480 240 410Z" fill="#635f5f" />
    <Shapes list={RED} fill="#8a4640" />
    <Shapes list={MINOR} fill="none" stroke="#535c68" strokeWidth="2.500" strokeLinejoin="round" />
    <Shapes list={WATER_FILL} fill="#375a66" />
    <Strokes list={RIVERS} color="#375a66" />
    <Shapes list={CREEKS} fill="none" stroke="#356373" strokeWidth="4" />
    <Strokes list={ROADS} color="#505964" />
    <Strokes list={DARK_ROADS} color="#50525a" />
    <Strokes list={HIGHWAYS} color="#2f3743" extra={3} />
    <Strokes list={HIGHWAYS} color="#3f4855" extra={-2} />
    {SHIELDS.map(([x, y, t, w], i) => (
      <g key={i} transform={`translate(${x} ${y})`}>
        <path d={`M${-w / 2}-22H${w / 2}L${w / 2 + 1} 8Q${w / 2} 18 0 23Q${-w / 2} 18 ${-w / 2 - 1} 8Z`} fill="#5f5325" stroke="#3f3818" strokeWidth="2" />
        <text y="9" fontSize="26" fontWeight="500" textAnchor="middle" fill="#171717">{t}</text>
      </g>
    ))}
    {POIS.map(([x, y, fill, glyph], i) => <Poi key={i} x={x} y={y} fill={fill} glyph={glyph} />)}
    <Station x={1924} y={222} />
    <Station x={2755} y={801} />
    <Station x={2854} y={867} />
    <Station x={2915} y={887} />
    <g stroke="#6d6a6a" strokeWidth="2" paintOrder="stroke" strokeLinejoin="round">
      {LABELS.map(([dx, x, y, text, size, w, anchor, fill, weight], i) => (
        <text
          key={i}
          x={dx + x}
          y={y}
          fontSize={labelSize(text, size)}
          fontWeight={weight || 400}
          textAnchor={ANCHOR[anchor]}
          textLength={w}
          lengthAdjust={weight && size < 41 && !isDevanagari(text) ? "spacing" : "spacingAndGlyphs"}
          fill={fill}
        >
          {text}
        </text>
      ))}
      <RoadName x={549} y={464} angle={25} w={98}>Sus Ln</RoadName>
      <RoadName x={1512} y={353} angle={56} w={240}>Ganeshkhind Rd</RoadName>
      <RoadName x={1510} y={532} angle={22} w={131}>Baner Rd</RoadName>
      <RoadName x={1399} y={667} angle={-9} w={232}>NDA Pashan Rd</RoadName>
      <path id="moledina" d="M2427 955Q2460 1030 2580 1048" fill="none" stroke="none" />
      <text fontSize="31" fill="#17181a"><textPath href="#moledina" textLength="182">Moledina Rd</textPath></text>
    </g>
    <Marker x={804} y={126} />
    <Marker x={1986} y={732} />
    <Marker x={2196} y={933} />
    <g fontFamily='"Liberation Sans", sans-serif' fontSize="43" fill="#b7b5b5">
      {[-533, 235, 1003, 1771, 2539].map((x) => <text key={x} x={x} y="621" textLength="626" lengthAdjust="spacingAndGlyphs">For development purposes only</text>)}
    </g>
    <text x="28" y="1180" fontSize="60" fontFamily="Lato, sans-serif" fontWeight="700" textLength="174" lengthAdjust="spacingAndGlyphs" stroke="#c4c4c4" strokeWidth="5" paintOrder="stroke" strokeLinejoin="round">
      <tspan fill="#4285f4">G</tspan><tspan fill="#ea4335">o</tspan><tspan fill="#fbbc04">o</tspan><tspan fill="#4285f4">g</tspan><tspan fill="#34a853">l</tspan><tspan fill="#ea4335">e</tspan>
    </text>
  </svg>
);

/* ---------- site ---------- */

const MountainMark = ({ w, h, color }) => (
  <svg width={w} height={h} viewBox="0 0 74 40" preserveAspectRatio="none">
    <path d="M0 37 27.500 8.500 34 16.500 49.500 1C54 9 63 18.500 73 24.500 63 21 57 15 51.500 10.500L47 12 36 20.500C39 28 43 34 49 39.500 39 34 33 27 28.500 19.500L18 30.500 22.500 33.500C14 33 7 34 0 37Z" fill={color} />
  </svg>
);

const Header = () => (
  <SiteHeader>
    <Brand>
      <MountainMark w={74} h={40} color="#fff" />
      <BrandName>
        <BrandWord $indent={6} $ls={-0.15}>TRAVEL</BrandWord>
        <BrandWord $ls={-0.3}>MONK</BrandWord>
      </BrandName>
    </Brand>
    <Nav>
      <NavLink $w={37}>Home</NavLink>
      <NavLink $w={139} $ls={-0.07}>International Packages</NavLink>
      <NavLink $w={99} $ls={-0.05}>Indian Packages</NavLink>
      <NavLink $w={57}>About Us</NavLink>
      <NavLink $w={68}>Contact Us</NavLink>
    </Nav>
    <SearchBox>
      <svg width="20" height="20" viewBox="0 0 20 20"><circle cx="8.500" cy="8.500" r="5.800" fill="none" stroke="#fff" strokeWidth="1.600" /><path d="M12.800 12.800L17.500 17.500" stroke="#fff" strokeWidth="1.800" /></svg>
    </SearchBox>
    <UserButton>User</UserButton>
  </SiteHeader>
);

const SiteFooter = () => (
  <Footer>
    <AboutColumn>
      <FooterLogo>
        <svg width="50" height="34" viewBox="0 0 50 34"><path d="M2 32.500 20.500 12 26 20 36 5.500C39 11 43 17 48.500 21 43 18.500 39 15 35.800 11L26.500 22C28 27 30 30 34 34 28 31 25.500 26.500 24.300 22L20 17 12 29 16 30C11 30 6 31 2 32.500Z" fill="#a04c4e" /></svg>
        <FooterBrand><RedWord>TRAVEL</RedWord><MonkWord>MONK</MonkWord></FooterBrand>
      </FooterLogo>
      <Line $ls={-0.07}>Travel Monk Adventures is a professional,</Line>
      <Line $ls={0.04}>well-managed young team offering expert</Line>
      <Line $ls={-0.05}>trekking, adventure activities, holiday tours,</Line>
      <Line>and road trips in the scenic hills of</Line>
      <Line $ls={-0.1}>Himachal Pradesh, Uttarakhand, Leh-</Line>
      <Line $ls={-0.07}>Ladakh, and North East India, as well as</Line>
      <Line $ls={-0.07}>customized tours across India.</Line>
    </AboutColumn>
    <ContactColumn>
      <FooterHeading $weight={600} $ls={0.08}>Get In Touch</FooterHeading>
      <ContactRow $gap={0} $mt={9}>
        <svg width="28" height="26" viewBox="0 0 28 26"><path d="M14 24.500C11 19 5 14 5 9.500a9 8.500 0 0 1 18 0C23 14 17 19 14 24.500Z" fill="none" stroke="#fff" strokeWidth="1.200" /><circle cx="14" cy="9.500" r="2.500" fill="none" stroke="#fff" strokeWidth="1.200" /></svg>
        <div><Line $ls={-0.06}>Delhi Industrial Area. Pincode, 110015.</Line><Line $ls={-0.12}>Taluk, New Delhi</Line></div>
      </ContactRow>
      <ContactRow $gap={8} $mt={8}>
        <svg width="24" height="24" viewBox="0 0 24 24"><path d="M3 4.800H21V19.200H3ZM3 6l9 6.500L21 6" fill="none" stroke="#fff" strokeWidth="2" strokeLinejoin="round" /></svg>
        <Line $ls={-0.04}>info@thetravelmonk.com</Line>
      </ContactRow>
      <ContactRow $gap={8.5} $mt={8}>
        <svg width="24" height="24" viewBox="0 0 24 24" fill="none" stroke="#fff" strokeWidth="2" strokeLinecap="round" strokeLinejoin="round"><path d="M13.800 2A9.500 9.500 0 0 1 22.500 10.500M13.800 6A5.500 5.500 0 0 1 18.500 10.500M22.500 17.300v3a2.300 2.300 0 0 1-2.500 2.200A20 20 0 0 1 1.500 4 2.200 2.200 0 0 1 3.700 1.500h3a2.200 2.200 0 0 1 2.200 1.900c.2 1 .4 2 .7 2.800a2.200 2.200 0 0 1-.5 2.300L8 9.600a17 17 0 0 0 6.500 6.500l1.200-1.200a2.200 2.200 0 0 1 2.300-.5c.9.3 1.800.5 2.700.7a2.200 2.200 0 0 1 1.800 2.200z" /></svg>
        <Line $ls={0.17}>+91-8146654329</Line>
      </ContactRow>
    </ContactColumn>
    <SocialColumn>
      <SocialRow>
        <SocialDot><FaFacebookF size={18} /></SocialDot>
        <SocialDot><AiFillInstagram size={22} /></SocialDot>
        <SocialDot><FaLinkedinIn size={20} /></SocialDot>
        <SocialDot><FaPinterestP size={18} /></SocialDot>
      </SocialRow>
      <Line>Follow us on social media platforms and</Line>
      <Line>stay updated</Line>
    </SocialColumn>
    <NewsColumn>
      <FooterHeading as="h3" $weight={400} $ls={0.27}>Join our Newsletter</FooterHeading>
      <FieldLabel>Your email</FieldLabel>
      <FormRow>
        <EmailField>Enter Your Email here</EmailField>
        <Submit>Submit</Submit>
      </FormRow>
    </NewsColumn>
  </Footer>
);

/* ---------- taskbar icons ---------- */

const ChromeLogo = ({ badge }) => (
  <svg width="24" height="26" viewBox="0 0 24 26" overflow="visible">
    <circle cx="12" cy="12.500" r="11.500" fill="#fbc116" />
    <path d="M2 6.800A11.500 11.500 0 0 1 22 6.800L12 7.500 8 14.500z" fill="#e33b2e" />
    <path d="M2 6.800A11.500 11.500 0 0 0 11.500 24l5-8.500-8.500 0z" fill="#2da94f" />
    <circle cx="12" cy="12.500" r="5.600" fill="#fff" />
    <circle cx="12" cy="12.500" r="4.500" fill="#3c7ff0" />
    {badge && <g><circle cx="18" cy="18.500" r="7.500" fill="#ddd" /><path d="M13 24c0-3 2-4 5-4s5 1 5 4q-5 4-10 0z" fill="#17191c" /><ellipse cx="18" cy="18" rx="2.800" ry="4" fill="#b98468" /><path d="M14.800 17c0-6 6.500-6 6.500 0z" fill="#151515" /></g>}
  </svg>
);

const TASKS = [
  { start: true, icon: <svg width="16" height="16" viewBox="0 0 16 16"><path fill="#fff" d="M0 2.300l6.500-.9v6.200H0zM7.300 1.300L16 0v7.600H7.300zM0 8.400h6.500v6.200L0 13.700zM7.300 8.400H16V16l-8.700-1.300z" /></svg> },
  { bar: 40, icon: <svg width="24" height="24" viewBox="0 0 24 24"><circle cx="12" cy="12" r="11.500" fill="#1ed760" /><path d="M5 8.500c5-1.500 10-1 14 1.300M5.500 12.200c4.500-1.200 8.500-.8 12 1.200M6 15.700c3.800-1 7.200-.6 10 1" fill="none" stroke="#10251b" strokeWidth="1.900" strokeLinecap="round" /></svg> },
  { icon: <svg width="24" height="24" viewBox="0 0 24 24"><defs><linearGradient id="cp1" x2="0" y2="1"><stop stopColor="#2a7bea" /><stop offset=".6" stopColor="#2cc3d6" /><stop offset="1" stopColor="#c5d944" /></linearGradient><linearGradient id="cp2" x2="0" y2="1"><stop stopColor="#b45be8" /><stop offset=".5" stopColor="#f6587f" /><stop offset="1" stopColor="#ffa24c" /></linearGradient></defs><path d="M7 1.500h8c2 0 3 2 3.500 4H13L9.500 18H3.500C1 18 .2 16 .8 13.500L4 4C4.500 2.500 5.500 1.500 7 1.500z" fill="url(#cp1)" /><path d="M17 22.500H9c-2 0-3-2-3.500-4H11L14.500 6h6c2.500 0 3.300 2 2.700 4.500L20 20c-.5 1.500-1.500 2.500-3 2.500z" fill="url(#cp2)" /></svg> },
  { icon: <svg width="24" height="24" viewBox="0 0 24 24"><defs><linearGradient id="ff" x1=".8" y1="0" x2=".2" y2="1"><stop stopColor="#ffe14a" /><stop offset=".5" stopColor="#ff8a1f" /><stop offset="1" stopColor="#f2304c" /></linearGradient></defs><path d="M14 .5c3 2 4 4 4.500 5.500C22 8 23.500 11 23 14.500A11 10.500 0 0 1 1 13C1 9 2 6 4 4l.5 2.500C6 5 8 4.500 9 5L8 8l6-1c-2-2-1.500-5 0-6.500z" fill="url(#ff)" /><circle cx="12" cy="13" r="5.300" fill="#8044c8" /><path d="M6 11c3-1 5-1 7 1-2 0-3 1-4 2-2 0-3-1-3-3z" fill="#ff9a28" /></svg> },
  { icon: <ChromeLogo /> },
  { icon: <svg width="26" height="26" viewBox="0 0 26 26"><defs><linearGradient id="ed" x2="1" y2=".5"><stop stopColor="#1f8fe0" /><stop offset=".6" stopColor="#33c2d8" /><stop offset="1" stopColor="#5fd95a" /></linearGradient></defs><path d="M1 13A12 12 0 0 1 25 11c0 4-3 6-7 6-3 0-4-1-3.500-2.500C16 10 6 8 1 13z" fill="url(#ed)" /><path d="M1 13c3-5 11-5 12-2-4 2-4 8 1 11 3 1 6 0 8-1-4 6-14 5-18-1-2-2-3-4-3-7z" fill="#1363b5" /><circle cx="7" cy="19" r="6.500" fill="#b9bdc1" /><circle cx="7" cy="17" r="2.300" fill="#7d8286" /><path d="M3 23c0-5 8-5 8 0z" fill="#7d8286" /></svg> },
  { bar: 40, icon: <svg width="24" height="24" viewBox="0 0 24 24"><circle cx="12" cy="12" r="11.500" fill="#fff" /><path d="M12 3.500c5.500 6 4 11 0 14.500C8 14.500 6.500 9.500 12 3.500z" fill="#10673d" /><path d="M12 5v15" stroke="#0b4a2c" /></svg> },
  { bar: 40, icon: <svg width="24" height="24" viewBox="0 0 24 24"><path d="M1 3h7.500l2 2.500H23V21H1z" fill="#e7a81c" /><path d="M1 6.500h22V21H1z" fill="#fcd462" /><path d="M5 22v-9h14v9h-4v-4.500H9V22z" fill="#3f8fd6" /></svg> },
  { bar: 48, active: true, icon: <ChromeLogo badge /> },
  { bar: 40, icon: <svg width="24" height="24" viewBox="0 0 24 24"><path d="M4 1l17 1 2 2v18L3 23z" fill="#e8eef8" stroke="#9db4d8" /><path d="M16 6h5M16 9h5M16 12h5M16 15h5M8 18h13M8 20.500h13" stroke="#4a72b8" strokeWidth="1.200" /><path d="M4 3l13 1.500-2 12L1 18z" fill="#3a68b8" /><path d="M5 6.500l1 8 4-6.500.5 6.500L15 7" fill="none" stroke="#fff" strokeWidth="1.700" /></svg> },
  { bar: 40, split: true, icon: <svg width="26" height="26" viewBox="0 0 26 26"><path d="M13 1l5.500 5.500L13 12 7.500 6.500z" fill="#f06a6a" /><path d="M6.500 7.500L12 13l-5.500 5.500L1 13z" fill="#7bb0f5" /><path d="M13 14l5.500 5.500L13 25l-5.500-5.500z" fill="#f5e06a" /><path d="M19.500 7.500L25 13l-5.500 5.500L14 13z" fill="#8ed68e" /><path d="M9 6l8 8M13 10v9" stroke="#2c3338" strokeWidth="1.700" /><circle cx="13" cy="18.500" r="1.900" fill="#2c3338" /><circle cx="17.500" cy="14" r="1.900" fill="#2c3338" /></svg> },
  { bar: 40, split: true, icon: <svg width="26" height="26" viewBox="0 0 26 26"><path d="M18 1l6.500 3v18L18 25 1.500 9.500l2-2L18 18z" fill="#1e8ad6" /><path d="M18 1v7L3.500 18.500l-2-2z" fill="#1574bd" /><path d="M18 1l6.500 3v18L18 25z" fill="#2ea4ee" /></svg> },
];

const SystemBar = () => (
  <Taskbar>
    {TASKS.map((t, i) => (
      <TaskSlot key={i} $start={t.start} $active={t.active}>
        <TaskIcon>{t.icon}</TaskIcon>
        {t.bar && <RunBar $w={t.bar} $split={t.split} />}
      </TaskSlot>
    ))}
    <Tray>
      <svg width="90" height="20" viewBox="0 0 90 20" fill="none" stroke="#fff" strokeWidth="1.200">
        <path d="M2 13l6-6 6 6" />
        <path d="M28 6.500h7v7h-7zM35 9l3-1.500v5L35 11M28.500 4q4.500-2.500 9 0M28.500 16q4.500 2.500 9 0" />
        <path d="M52 5.500h12v8H52M58 13.500v3M54.500 16.500h7M49.500 4.500h4v3h-4zM51.500 8v8" />
        <path d="M72.500 8h2.500l4-4v12l-4-4h-2.500zM81 8q1.500 2 0 4M83.500 6q3 4 0 8M86 4q4.500 6 0 12" />
      </svg>
      <TrayText $w={26} $ml={6}>ENG<br />IN</TrayText>
      <TrayText $w={60} $ml={8}>3:11 PM<br />12/17/2024</TrayText>
      <NoticeIcon width="28" height="26" viewBox="0 0 28 26">
        <path d="M1 1h16v13H8l-3 3v-3H1z" fill="#fff" /><path d="M4 4.500h10M4 7.500h10M4 10.500h7" stroke="#1a2945" />
        <circle cx="16.500" cy="15.500" r="7.800" fill="#2b2f38" stroke="#98a0ab" />
        <text x="16.500" y="19.500" fontSize="11.500" textAnchor="middle" fill="#fff">1</text>
      </NoticeIcon>
      <ShowDesktop />
    </Tray>
  </Taskbar>
);

export default function App() {
  return (
    <Screen>
      <Global />
      <Chrome />
      <Viewport>
        <Page>
          <Header />
          <MapFrame>
            <MapCanvas />
            <MapButton $top={10} $h={40}>
              <svg width="40" height="40" viewBox="0 0 40 40"><path d="M12 17v-5h5M23 12h5v5M28 23v5h-5M17 28h-5v-5" fill="none" stroke="#666" strokeWidth="2.200" /></svg>
            </MapButton>
            <MapButton $top={295} $h={81}>
              <svg width="40" height="81" viewBox="0 0 40 81"><path d="M11 20h18M20 11v18M11 61h18" stroke="#666" strokeWidth="4" /><path d="M5 40.500h30" stroke="#e6e6e6" /></svg>
            </MapButton>
            <Attribution>
              <Credit $w={98} $first>Keyboard shortcuts</Credit>
              <Credit $w={87}>Map data ©2024</Credit>
              <Credit $w={40}>Terms</Credit>
              <Credit $w={95}>Report a map error</Credit>
            </Attribution>
          </MapFrame>
          <SiteFooter />
        </Page>
        <ScrollTrack>
          <svg width="7" height="4" viewBox="0 0 7 4"><path d="M0 4L3.500 0 7 4z" fill="#79808a" /></svg>
          <ScrollThumb />
          <svg width="7" height="4" viewBox="0 0 7 4"><path d="M0 0l3.500 4L7 0z" fill="#79808a" /></svg>
        </ScrollTrack>
      </Viewport>
      <SystemBar />
    </Screen>
  );
}
